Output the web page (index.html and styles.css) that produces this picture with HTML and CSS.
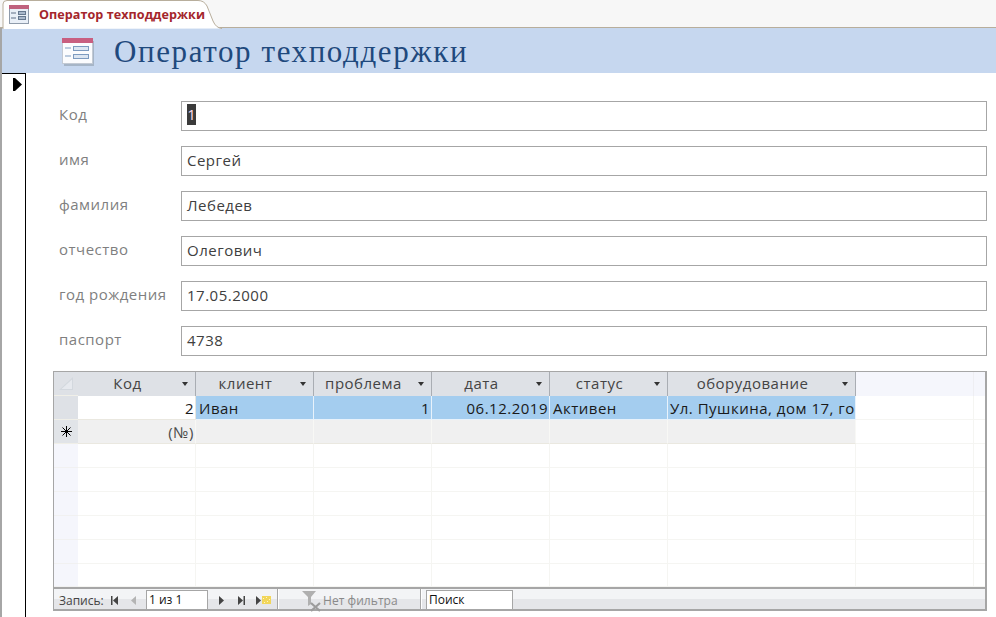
FILE: index.html
```html
<!DOCTYPE html>
<html lang="ru">
<head>
<meta charset="utf-8">
<title>Оператор техподдержки</title>
<link rel="stylesheet" href="styles.css">
</head>
<body>
<div class="app">
  <div class="tabstrip">
    <div class="tab">
      <svg class="tab-shape" width="222" height="29" viewBox="0 0 222 29"><path d="M3 29V4Q3 .5 7 .5H198Q204 .5 207 6L213 21Q216 28 222 28.5" fill="#fff" stroke="#b8ae9c"/></svg>
      <svg class="tab-icon" width="20" height="19" viewBox="0 0 20 19"><rect x=".5" y=".5" width="19" height="18" fill="#e9eff7" stroke="#8f9bab"/><rect x="0" y="0" width="20" height="4" fill="#c0627e"/><path d="M2 8h5M2 13h5" stroke="#5f6f85"/><rect x="9.500" y="6.500" width="7" height="3" fill="#a9b8cb" stroke="#66788f"/><rect x="9.500" y="11.500" width="7" height="3" fill="#a9b8cb" stroke="#66788f"/></svg>
      <span class="tab-title">Оператор техподдержки</span>
    </div>
  </div>
  <div class="frame">
    <header class="head">
      <svg class="head-icon" width="32" height="28" viewBox="0 0 32 28"><rect x="2" y="3" width="30" height="25" fill="#8c99a6" opacity=".55"/><rect x=".5" y=".5" width="30" height="25" fill="#fbfcfe" stroke="#c3cad4"/><rect x="0" y="0" width="31" height="5" fill="#c85f80"/><path d="M3 10h6M3 18h6" stroke="#7d9bc0"/><rect x="11.500" y="8.500" width="15" height="4" fill="#dce6f2" stroke="#7d9bc0"/><rect x="11.500" y="16.500" width="15" height="4" fill="#dce6f2" stroke="#7d9bc0"/></svg>
      <h1 class="head-title">Оператор техподдержки</h1>
    </header>
    <div class="body">
      <div class="selector"><svg width="9" height="13" viewBox="0 0 9 13"><path d="M0 0h2l7 6.500-7 6.500H0z" fill="#000"/></svg></div>
      <main class="form">
        <div class="fields">
          <label class="label">Код</label><div class="input"><span class="sel">1</span></div>
          <label class="label">имя</label><div class="input">Сергей</div>
          <label class="label">фамилия</label><div class="input">Лебедев</div>
          <label class="label">отчество</label><div class="input">Олегович</div>
          <label class="label">год рождения</label><div class="input">17.05.2000</div>
          <label class="label">паспорт</label><div class="input">4738</div>
        </div>
        <section class="sub">
          <div class="sheet">
            <div class="corner"><svg width="16" height="14" viewBox="0 0 16 14"><path d="M15 0V13H1z" fill="#d3d8de"/><path d="M14 2.500V12H3.500z" fill="#e6e9ee"/></svg></div>
            <div class="th"><span class="th-text">Код</span><i class="caret"></i></div>
            <div class="th"><span class="th-text">клиент</span><i class="caret"></i></div>
            <div class="th"><span class="th-text">проблема</span><i class="caret"></i></div>
            <div class="th"><span class="th-text">дата</span><i class="caret"></i></div>
            <div class="th"><span class="th-text">статус</span><i class="caret"></i></div>
            <div class="th"><span class="th-text">оборудование</span><i class="caret"></i></div>
            <div class="hfill"></div>
            <div class="hfill2"></div>

            <div class="rs"></div>
            <div class="td num">2</div>
            <div class="td hl">Иван</div>
            <div class="td hl num">1</div>
            <div class="td hl num">06.12.2019</div>
            <div class="td hl">Активен</div>
            <div class="td hl clip">Ул. Пушкина, дом 17, го</div>
            <div class="e"></div><div class="e l"></div>

            <div class="rs star"><svg width="11" height="11" viewBox="0 0 11 11"><path d="M5.500 0v11M0 5.500h11M1.500 1.500l8 8M9.500 1.500l-8 8" stroke="#000" stroke-width="1"/></svg></div>
            <div class="td new num muted">(№)</div>
            <div class="td new"></div><div class="td new"></div><div class="td new"></div><div class="td new"></div><div class="td new"></div>
            <div class="e"></div><div class="e l"></div>

            <div class="rs blank"></div><div class="e"></div><div class="e"></div><div class="e"></div><div class="e"></div><div class="e"></div><div class="e"></div><div class="e"></div><div class="e l"></div>
            <div class="rs blank"></div><div class="e"></div><div class="e"></div><div class="e"></div><div class="e"></div><div class="e"></div><div class="e"></div><div class="e"></div><div class="e l"></div>
            <div class="rs blank"></div><div class="e"></div><div class="e"></div><div class="e"></div><div class="e"></div><div class="e"></div><div class="e"></div><div class="e"></div><div class="e l"></div>
            <div class="rs blank"></div><div class="e"></div><div class="e"></div><div class="e"></div><div class="e"></div><div class="e"></div><div class="e"></div><div class="e"></div><div class="e l"></div>
            <div class="rs blank"></div><div class="e"></div><div class="e"></div><div class="e"></div><div class="e"></div><div class="e"></div><div class="e"></div><div class="e"></div><div class="e l"></div>
            <div class="rs blank"></div><div class="e"></div><div class="e"></div><div class="e"></div><div class="e"></div><div class="e"></div><div class="e"></div><div class="e"></div><div class="e l"></div>
          </div>
          <footer class="nav">
            <span class="nav-label">Запись:</span>
            <svg class="nb nb-first" width="7" height="9" viewBox="0 0 7 9"><path d="M0 0h1.500v9H0zM7 0v9L2 4.500z" fill="#444"/></svg>
            <svg class="nb nb-prev" width="5" height="9" viewBox="0 0 5 9"><path d="M5 0v9L0 4.500z" fill="#b4b4b4"/></svg>
            <div class="nav-input">1 из 1</div>
            <svg class="nb nb-next" width="5" height="9" viewBox="0 0 5 9"><path d="M0 0v9l5-4.500z" fill="#444"/></svg>
            <svg class="nb nb-last" width="7" height="9" viewBox="0 0 7 9"><path d="M0 0v9l5-4.500zM5.500 0H7v9H5.500z" fill="#444"/></svg>
            <svg class="nb nb-new" width="15" height="9" viewBox="0 0 15 9"><path d="M0 0v9l5-4.500z" fill="#444"/><rect x="6" y="0" width="9" height="8" fill="#f2d65a"/><path d="M7 2h1v1H7zM10 1h1v1h-1zM13 3h1v1h-1zM8 6h1v1H8zM11 5h1v1h-1z" fill="#fff6c8"/></svg>
            <span class="nav-sep"></span>
            <svg class="filter" width="21" height="21" viewBox="0 0 21 21"><path d="M0 0h14L9 6v7l-3 2V6z" fill="#b0b0b0"/><path d="M9 12l9 8M18 12l-9 8" stroke="#9c9c9c" stroke-width="2.200"/></svg>
            <span class="nav-filter">Нет фильтра</span>
            <span class="nav-sep sep2"></span>
            <div class="nav-search">Поиск</div>
          </footer>
        </section>
      </main>
    </div>
  </div>
</div>
</body>
</html>
```
FILE: styles.css
```css
* { box-sizing: border-box; }
html, body { margin: 0; padding: 0; background: #fff; }
body { width: 996px; height: 617px; overflow: hidden; font-family: "Open Sans", "Noto Sans", sans-serif; }
.app { width: 996px; height: 617px; display: flex; flex-direction: column; }

.tabstrip { height: 28px; flex: none; background: #f7f7f7; border-bottom: 1px solid #b8ae9c; position: relative; }
.tab { position: relative; height: 29px; width: 222px; display: flex; align-items: center; padding: 0 0 1px 9px; }
.tab-shape { position: absolute; left: 0; top: 0; }
.tab-icon { position: relative; flex: none; margin-right: 10px; }
.tab-title { position: relative; font-size: 12.600px; letter-spacing: .05px; font-weight: 700; color: #a4262c; white-space: nowrap; }

.frame { flex: 1; display: flex; flex-direction: column; border-left: 2px solid #a6a6a6; min-height: 0; }
.head { height: 45px; flex: none; background: #c6d7ef; display: flex; align-items: center; padding-left: 60px; }
.head-icon { flex: none; margin-top: 2px; }
.head-title { margin: 3px 0 0 20px; font-family: "Liberation Serif", serif; font-weight: 400; font-size: 31px; letter-spacing: 1.6px; color: #1f497d; white-space: nowrap; }

.body { flex: 1; display: flex; min-height: 0; }
.selector { width: 24px; flex: none; border-top: 1px solid #000; border-right: 1px solid #000; padding: 4px 0 0 11px; line-height: 0; }
.form { flex: 1; padding: 28px 9px 0 27px; min-width: 0; }

.fields { display: grid; grid-template-columns: 122px 806px; grid-auto-rows: 30px; row-gap: 15px; margin-left: 6px; }
.label { font-size: 15px; letter-spacing: .5px; line-height: 27px; color: #7f7f7f; white-space: nowrap; }
.input { border: 1px solid #a6a6a6; background: #fff; font-size: 15px; letter-spacing: .5px; line-height: 27px; padding-left: 5px; color: #404040; white-space: nowrap; }
.sel { background: #3b3b3b; color: #fde; display: inline-block; line-height: 21px; height: 21px; width: 9px; text-align: center; letter-spacing: 0; vertical-align: 1px; }

.sub { margin-top: 15px; height: 240px; width: 934px; border: 1px solid #a6a6a6; border-width: 1px 2px 2px 1px; display: flex; flex-direction: column; font-size: 15px; letter-spacing: .5px; color: #222; }
.sheet { display: grid; grid-template-columns: 24px repeat(5, 118px) 188px 118px 1fr; grid-template-rows: repeat(8, 24px); height: 215px; flex: none; }
.corner, .rs { background: #dee1e6; border-bottom: 1px solid #f0efe8; }
.corner { display: flex; align-items: center; justify-content: center; }
.rs.blank { background: #f5f6fc; border-bottom-color: #f1f1f1; }
.star { display: flex; align-items: center; justify-content: center; background: #e1e4e8; }
.th { background: #dee1e6; border-right: 1px solid #a9adb3; position: relative; display: flex; align-items: center; justify-content: center; padding: 0 18px 2px 0; color: #444; }
.th-text { white-space: nowrap; line-height: 22px; }
.caret { position: absolute; right: 7px; top: 10px; width: 0; height: 0; border-left: 3.500px solid transparent; border-right: 3.500px solid transparent; border-top: 4px solid #333; }
.hfill, .hfill2 { background: #f5f6fc; }
.hfill { border-right: 1px solid #eeeef2; }
.td { background: #fff; border-right: 1px solid #e9e7df; border-bottom: 1px solid #eae8e0; line-height: 24px; padding: 0 1px 0 3px; white-space: nowrap; overflow: hidden; color: #1a1a1a; }
.td.hl { background: #a4cdef; border-right-color: #e8f2fb; border-bottom-color: #e8f2fb; }
.td.new { background: #f0f0f0; border-right-color: #f8f8f5; }
.num { text-align: right; }
.muted { color: #4a4a4a; }
.e { border-right: 1px solid #f5f5f2; border-bottom: 1px solid #f5f5f2; background: #fff; }
.e.l { border-right: 0; }
.td.clip { padding-left: 2px; padding-right: 0; }

.nav { flex: 1; display: flex; align-items: center; border-top: 2px solid #a6a6a6; background: linear-gradient(#f3f4f6 0, #f3f4f6 48%, #e5e6e9 48%, #e5e6e9 100%); font-size: 12px; letter-spacing: 0; color: #444; padding: 2px 0 0 5px; min-height: 0; }
.nav-label { white-space: nowrap; width: 52px; flex: none; }
.nb { flex: none; }
.nb-first { margin-left: 0; }
.nb-prev { margin-left: 13px; }
.nav-input { width: 62px; height: 20px; margin-left: 10px; flex: none; border: 1px solid #a6a6a6; background: #fff; line-height: 18px; padding-left: 2px; color: #111; white-space: nowrap; }
.nb-next { margin-left: 11px; }
.nb-last { margin-left: 14px; }
.nb-new { margin-left: 11px; }
.nav-sep { width: 2px; align-self: stretch; flex: none; margin: -2px 0 0 6px; background: #fff; border-left: 1px solid #a6a6a6; }
.filter { margin-left: 23px; margin-top: 2px; flex: none; margin-right: -1px; }
.nav-filter { margin-left: 1px; width: 91px; white-space: nowrap; color: #8a8a8a; flex: none; letter-spacing: .05px; }
.sep2 { margin-left: 6px; }
.nav-search { width: 87px; height: 20px; margin-left: 4px; flex: none; border: 1px solid #a6a6a6; background: #fff; line-height: 18px; padding-left: 2px; color: #111; white-space: nowrap; }
```
